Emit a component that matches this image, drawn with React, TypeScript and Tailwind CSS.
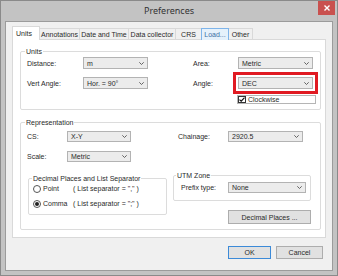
export default function App() {
  return (
    <div className="w-[338px] h-[276px] flex flex-col bg-[#c3c3c3] border border-[#8a8a8a] font-['Liberation_Sans',Arial,sans-serif] text-[#2a2a2a] text-[7px] leading-none">
      <div className="h-[20px] shrink-0 grid grid-cols-[1fr_auto_1fr] items-start">
        <div />
        <div className="pt-[5px] text-[9px] text-[#333] font-['Noto_Sans',sans-serif]">Preferences</div>
        <div className="flex justify-end pr-[2px]">
          <div className="w-[17px] h-[14px] bg-[#c9514f] flex items-center justify-center">
            <CloseIcon />
          </div>
        </div>
      </div>
      <div className="flex-1 mx-[4px] mb-[4px] bg-[#f0f0f0] border border-[#9b9b9b] pl-[6px] pt-[4px] flex flex-col">
        <div className="flex items-end h-[14px]">
          <Tab label="Units" selected />
          <Tab label="Annotations" w="w-[41px]" />
          <Tab label="Date and Time" w="w-[50px]" />
          <Tab label="Data collector" w="w-[48px]" />
          <Tab label="CRS" w="w-[27px]" />
          <Tab label="Load..." w="w-[28px]" hover />
          <Tab label="Other" w="w-[25px]" />
        </div>
        <div className="w-[314px] bg-white border border-[#d9d9d9] -mt-[1px] pl-[7px] pt-[7px] pb-[7px]">
          <fieldset className="w-[301px] border border-[#dcdcdc] rounded-[2px] pl-[6px] pb-[5px]">
            <legend className="-ml-[2px] px-[1px] leading-[9px]">Units</legend>
            <div className="flex items-center mt-[1px] h-[12px]">
              <span className="w-[56px]">Distance:</span>
              <Select value="m" w="w-[65px]" />
              <span className="w-[45px] ml-[45px]">Area:</span>
              <Select value="Metric" w="w-[75px]" />
            </div>
            <div className="flex items-center mt-[8px] h-[12px]">
              <span className="w-[56px]">Vert Angle:</span>
              <Select value="Hor. = 90°" w="w-[65px]" />
              <span className="w-[45px] ml-[45px]">Angle:</span>
              <div className="outline outline-[3px] outline-[#e01a22] outline-offset-[2px]">
                <Select value="DEC" w="w-[75px]" />
              </div>
            </div>
            <div className="flex mt-[6px] h-[9px]">
              <div className="ml-[210px] w-[79px] h-[9px] border border-[#b5b5b5] flex items-center gap-[2px]">
                <div className="w-[8px] h-[7px] border border-[#333] bg-white flex items-center justify-center">
                  <CheckIcon />
                </div>
                <span>Clockwise</span>
              </div>
            </div>
          </fieldset>

          <fieldset className="w-[301px] mt-[8px] border border-[#dcdcdc] rounded-[2px] pl-[6px] pb-[5px]">
            <legend className="-ml-[2px] px-[1px] leading-[9px]">Representation</legend>
            <div className="flex">
              <div className="w-[146px] flex flex-col">
                <div className="flex items-center mt-[4px] h-[11px]">
                  <span className="w-[40px]">CS:</span>
                  <Select value="X-Y" w="w-[64px]" h="h-[11px]" />
                </div>
                <div className="flex items-center mt-[9px] h-[11px]">
                  <span className="w-[40px]">Scale:</span>
                  <Select value="Metric" w="w-[64px]" h="h-[11px]" />
                </div>
                <fieldset className="w-[139px] ml-[1px] mt-[12px] border border-[#dcdcdc] rounded-[2px] pl-[4px] pb-[6px]">
                  <legend className="-ml-[1px] px-[1px] leading-[9px]">Decimal Places and List Separator</legend>
                  <div className="flex items-center mt-[1px] h-[9px]">
                    <Radio />
                    <span className="ml-[2px] w-[30px]">Point</span>
                    <span>( List separator = "," )</span>
                  </div>
                  <div className="flex items-center mt-[6px] h-[9px]">
                    <Radio checked />
                    <span className="ml-[2px] w-[30px]">Comma</span>
                    <span>( List separator = ";" )</span>
                  </div>
                </fieldset>
              </div>
              <div className="flex flex-col">
                <div className="flex items-center mt-[4px] h-[11px] pl-[5px]">
                  <span className="w-[50px]">Chainage:</span>
                  <Select value="2920.5" w="w-[75px]" h="h-[11px]" />
                </div>
                <fieldset className="w-[138px] mt-[29px] border border-[#dcdcdc] rounded-[2px] pl-[7px] pb-[7px]">
                  <legend className="-ml-[5px] px-[1px] leading-[9px]">UTM Zone</legend>
                  <div className="flex items-center mt-[2px] h-[11px]">
                    <span className="w-[47px]">Prefix type:</span>
                    <Select value="None" w="w-[78px]" h="h-[11px]" />
                  </div>
                </fieldset>
                <button className="ml-[55px] mt-[9px] w-[83px] h-[14px] border border-[#adadad] bg-[#e1e1e1] text-[7px] leading-none">
                  Decimal Places ...
                </button>
              </div>
            </div>
          </fieldset>
        </div>
        <div className="flex justify-end gap-[5px] pr-[9px] mt-[8px]">
          <button className="w-[43px] h-[13px] border border-[#3c8ad8] bg-[#e1e1e1] text-[7px] leading-none">OK</button>
          <button className="w-[47px] h-[13px] border border-[#adadad] bg-[#e1e1e1] text-[7px] leading-none">Cancel</button>
        </div>
      </div>
    </div>
  );
}

function Tab({ label, w, selected, hover }: { label: string; w?: string; selected?: boolean; hover?: boolean }) {
  if (selected) {
    return (
      <div className="w-[28px] h-[14px] bg-white border border-b-0 border-[#d9d9d9] flex items-center pl-[3px] relative z-10">
        {label}
      </div>
    );
  }
  return (
    <div
      className={`${w} h-[12px] -ml-[1px] border border-b-0 flex items-center justify-center ${
        hover ? "bg-[#e5f1fb] border-[#7eb4ea] text-[#3a6ea5] relative z-[5]" : "bg-[#f0f0f0] border-[#d9d9d9]"
      }`}
    >
      {label}
    </div>
  );
}

function Select({ value, w, h = "h-[12px]" }: { value: string; w: string; h?: string }) {
  return (
    <div className={`${w} ${h} flex items-center justify-between border border-[#b3b3b3] bg-[#ececec] pl-[3px] pr-[3px]`}>
      <span>{value}</span>
      <svg width="5" height="3" viewBox="0 0 5 3" fill="none" stroke="#555" strokeWidth="0.9">
        <path d="M0.3 0.3L2.5 2.5L4.7 0.3" />
      </svg>
    </div>
  );
}

function Radio({ checked }: { checked?: boolean }) {
  return (
    <div className="w-[8px] h-[8px] rounded-full border border-[#555] bg-white flex items-center justify-center">
      {checked && <div className="w-[4px] h-[4px] rounded-full bg-[#222]" />}
    </div>
  );
}

function CheckIcon() {
  return (
    <svg width="6" height="5" viewBox="0 0 6 5" fill="none" stroke="#111" strokeWidth="1.2">
      <path d="M0.5 2.6L2.2 4.2L5.5 0.6" />
    </svg>
  );
}

function CloseIcon() {
  return (
    <svg width="6" height="6" viewBox="0 0 6 6" stroke="white" strokeWidth="1.4">
      <path d="M0.5 0.5L5.5 5.5M5.5 0.5L0.5 5.5" />
    </svg>
  );
}
